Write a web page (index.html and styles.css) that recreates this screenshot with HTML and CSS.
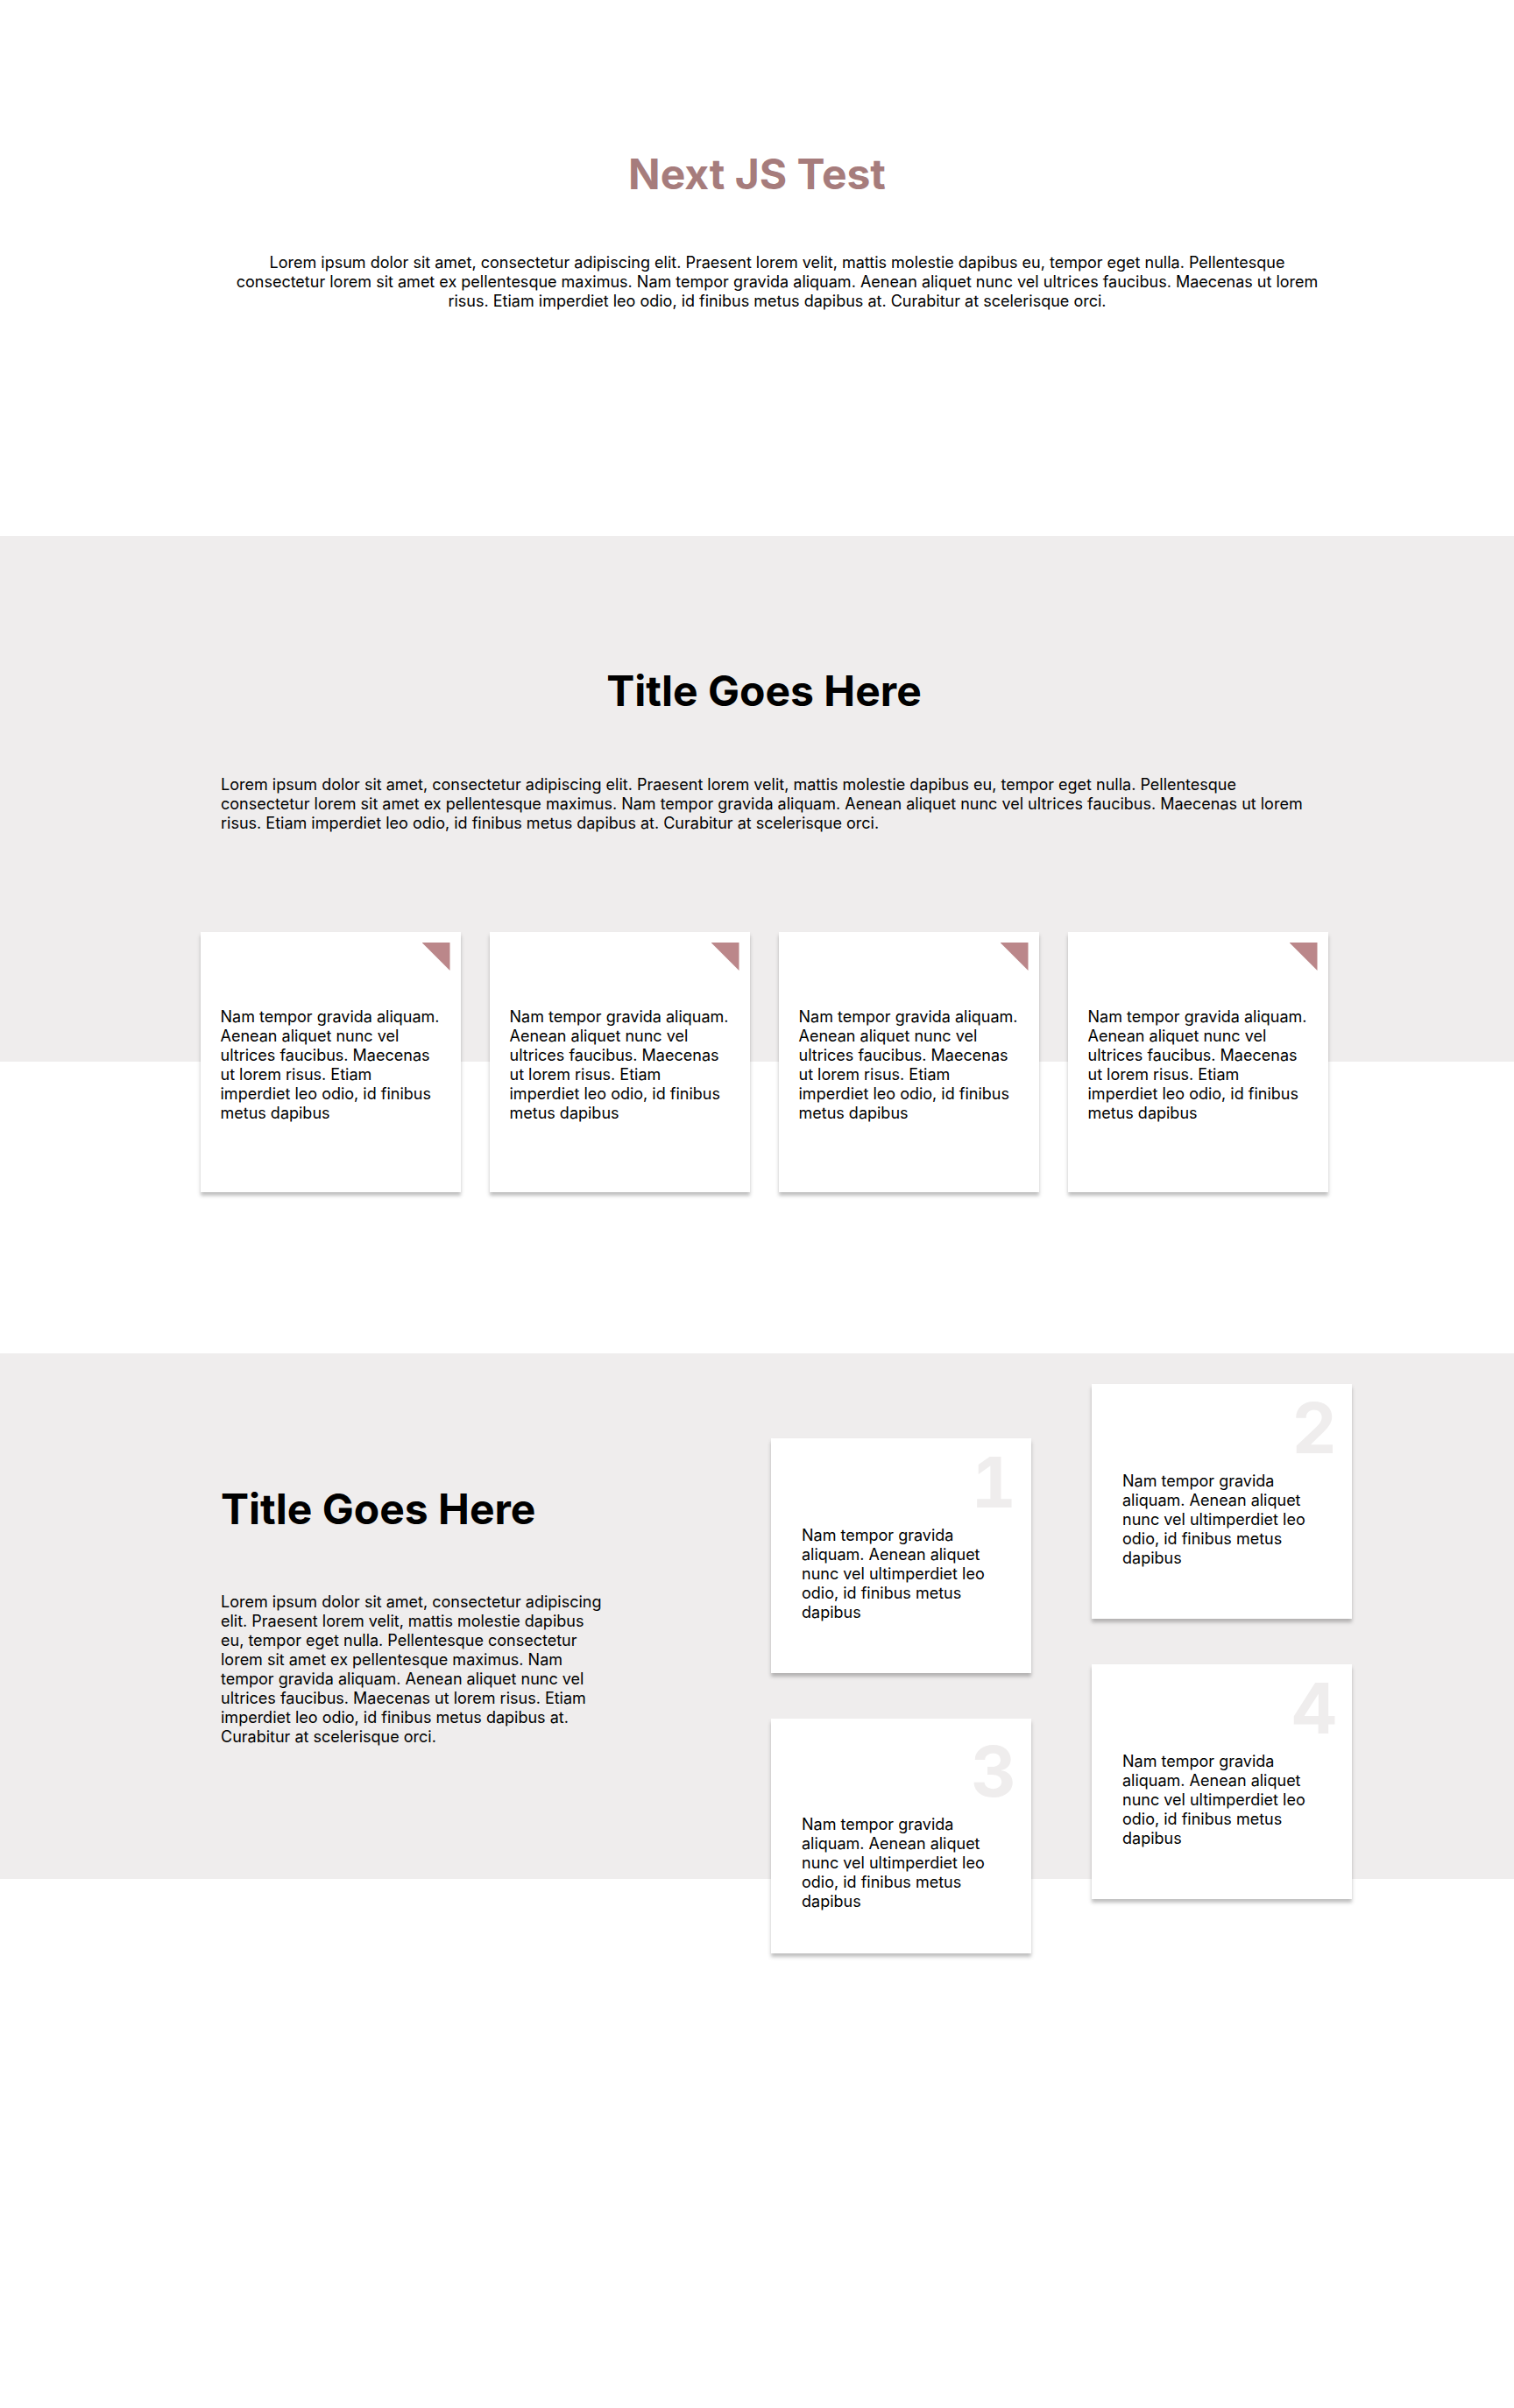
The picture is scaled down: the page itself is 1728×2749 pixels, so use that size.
FILE: index.html
```html
<!DOCTYPE html>
<html lang="en">
<head>
<meta charset="utf-8">
<title>Next JS Test</title>
<link rel="stylesheet" href="styles.css">
</head>
<body>
<section class="hero">
  <h1 class="hero-title">Next JS Test</h1>
  <p class="hero-text">Lorem ipsum dolor sit amet, consectetur adipiscing elit. Praesent lorem velit, mattis molestie dapibus eu, tempor eget nulla. Pellentesque consectetur lorem sit amet ex pellentesque maximus. Nam tempor gravida aliquam. Aenean aliquet nunc vel ultrices faucibus. Maecenas ut lorem risus. Etiam imperdiet leo odio, id finibus metus dapibus at. Curabitur at scelerisque orci.</p>
</section>

<section class="features">
  <div class="features-inner">
    <h2 class="section-title center">Title Goes Here</h2>
    <p class="section-text">Lorem ipsum dolor sit amet, consectetur adipiscing elit. Praesent lorem velit, mattis molestie dapibus eu, tempor eget nulla. Pellentesque consectetur lorem sit amet ex pellentesque maximus. Nam tempor gravida aliquam. Aenean aliquet nunc vel ultrices faucibus. Maecenas ut lorem risus. Etiam imperdiet leo odio, id finibus metus dapibus at. Curabitur at scelerisque orci.</p>
  </div>
  <div class="feature-row">
    <div class="feature-card"><span class="corner"></span><p>Nam tempor gravida aliquam. Aenean aliquet nunc vel ultrices faucibus. Maecenas ut lorem risus. Etiam imperdiet leo odio, id finibus metus dapibus</p></div>
    <div class="feature-card"><span class="corner"></span><p>Nam tempor gravida aliquam. Aenean aliquet nunc vel ultrices faucibus. Maecenas ut lorem risus. Etiam imperdiet leo odio, id finibus metus dapibus</p></div>
    <div class="feature-card"><span class="corner"></span><p>Nam tempor gravida aliquam. Aenean aliquet nunc vel ultrices faucibus. Maecenas ut lorem risus. Etiam imperdiet leo odio, id finibus metus dapibus</p></div>
    <div class="feature-card"><span class="corner"></span><p>Nam tempor gravida aliquam. Aenean aliquet nunc vel ultrices faucibus. Maecenas ut lorem risus. Etiam imperdiet leo odio, id finibus metus dapibus</p></div>
  </div>
</section>

<section class="steps">
  <div class="steps-intro">
    <h2 class="section-title">Title Goes Here</h2>
    <p class="steps-text">Lorem ipsum dolor sit amet, consectetur adipiscing elit. Praesent lorem velit, mattis molestie dapibus eu, tempor eget nulla. Pellentesque consectetur lorem sit amet ex pellentesque maximus. Nam tempor gravida aliquam. Aenean aliquet nunc vel ultrices faucibus. Maecenas ut lorem risus. Etiam imperdiet leo odio, id finibus metus dapibus at. Curabitur at scelerisque orci.</p>
  </div>
  <div class="steps-grid">
    <div class="steps-col steps-col-low">
      <div class="step-card"><div class="step-num">1</div><p>Nam tempor gravida aliquam. Aenean aliquet nunc vel ultimperdiet leo odio, id finibus metus dapibus</p></div>
      <div class="step-card step-card-shift"><div class="step-num">3</div><p>Nam tempor gravida aliquam. Aenean aliquet nunc vel ultimperdiet leo odio, id finibus metus dapibus</p></div>
    </div>
    <div class="steps-col steps-col-high">
      <div class="step-card"><div class="step-num">2</div><p>Nam tempor gravida aliquam. Aenean aliquet nunc vel ultimperdiet leo odio, id finibus metus dapibus</p></div>
      <div class="step-card"><div class="step-num">4</div><p>Nam tempor gravida aliquam. Aenean aliquet nunc vel ultimperdiet leo odio, id finibus metus dapibus</p></div>
    </div>
  </div>
</section>
</body>
</html>
```

FILE: styles.css
```css
* { box-sizing: border-box; }

html { background: #ffffff; }

body {
  margin: 0;
  padding-bottom: 604px;
  background: #ffffff;
  color: #000000;
  font-family: Inter, "Noto Sans", "Liberation Sans", sans-serif;
  font-size: 18px;
  line-height: 22px;
}

p { margin: 0; }

/* hero */
.hero {
  height: 612px;
  padding-top: 170px;
}
.hero-title {
  margin: 0;
  text-align: center;
  font-size: 48px;
  font-weight: 700;
  line-height: 58px;
  color: #a67c7c;
}
.hero-text {
  max-width: 1286px;
  margin: 61px auto 0;
  padding-left: 46px;
  text-align: center;
}

/* features */
.features {
  height: 600px;
  background: #efeded;
  padding-top: 148px;
  padding-left: 16px;
}
.features-inner {
  max-width: 1240px;
  margin: 0 auto;
}
.section-title {
  margin: 0 0 67px;
  font-size: 48px;
  font-weight: 700;
  line-height: 58px;
}
.section-title.center { text-align: center; }

.feature-row {
  display: flex;
  justify-content: center;
  gap: 33px;
  margin-top: 113px;
}
.feature-card {
  position: relative;
  width: 297px;
  height: 297px;
  flex: none;
  background: #ffffff;
  box-shadow: 0 4px 4px rgba(0, 0, 0, 0.25);
  padding: 86px 20px 0 23px;
}
.corner {
  position: absolute;
  top: 12px;
  right: 12px;
  width: 32px;
  height: 32px;
  background: #bb878a;
  clip-path: polygon(0 0, 100% 0, 100% 100%);
}

/* steps */
.steps {
  height: 600px;
  margin-top: 333px;
  background: #efeded;
  display: flex;
  align-items: flex-start;
  padding-left: 252px;
}
.steps-intro {
  width: 440px;
  flex: none;
  margin-top: 149px;
}
.steps-intro .section-title { margin-bottom: 66px; }

.steps-grid {
  display: flex;
  gap: 69px;
  margin-left: 188px;
  align-items: flex-start;
}
.steps-col {
  display: flex;
  flex-direction: column;
  gap: 52px;
}
.steps-col-low { margin-top: 97px; }
.steps-col-high { margin-top: 35px; }

.step-card {
  width: 297px;
  height: 268px;
  flex: none;
  background: #ffffff;
  box-shadow: 0 4px 4px rgba(0, 0, 0, 0.25);
  padding: 10px 17px 0 35px;
}
.step-card-shift { padding-top: 20px; }
.step-num {
  text-align: right;
  font-size: 80px;
  font-weight: 700;
  line-height: 80px;
  color: #efeded;
  font-feature-settings: "tnum" 1;
}
.step-card p {
  margin-top: 10px;
  padding-right: 18px;
}
```
